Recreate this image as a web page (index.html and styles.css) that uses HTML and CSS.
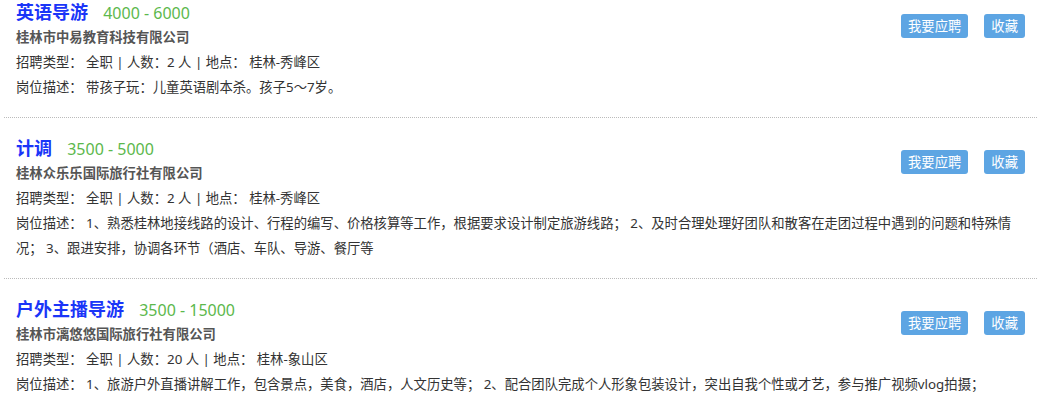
FILE: index.html
```html
<!DOCTYPE html>
<html lang="zh-CN">
<head>
  <meta charset="UTF-8">
  <title>招聘信息 - 桂林导游</title>
  <meta name="viewport" content="width=device-width, initial-scale=1.0">
  <link rel="stylesheet" href="styles.css">
</head>
<body>

  <div class="job-list">

    <div class="job">
      <div class="actions">
        <a class="btn" href="#">我要应聘</a>
        <a class="btn" href="#">收藏</a>
      </div>
      <div class="job-title">
        <a href="#">英语导游</a>
        <span class="salary">4000 - 6000</span>
      </div>
      <p class="company">桂林市中易教育科技有限公司</p>
      <p>招聘类型： 全职 | 人数：2 人 | 地点： 桂林-秀峰区</p>
      <p class="desc">岗位描述： 带孩子玩：儿童英语剧本杀。孩子5～7岁。</p>
    </div>

    <div class="job">
      <div class="actions">
        <a class="btn" href="#">我要应聘</a>
        <a class="btn" href="#">收藏</a>
      </div>
      <div class="job-title">
        <a href="#">计调</a>
        <span class="salary">3500 - 5000</span>
      </div>
      <p class="company">桂林众乐乐国际旅行社有限公司</p>
      <p>招聘类型： 全职 | 人数：2 人 | 地点： 桂林-秀峰区</p>
      <p class="desc">岗位描述： 1、熟悉桂林地接线路的设计、行程的编写、价格核算等工作，根据要求设计制定旅游线路； 2、及时合理处理好团队和散客在走团过程中遇到的问题和特殊情况； 3、跟进安排，协调各环节（酒店、车队、导游、餐厅等</p>
    </div>

    <div class="job">
      <div class="actions">
        <a class="btn" href="#">我要应聘</a>
        <a class="btn" href="#">收藏</a>
      </div>
      <div class="job-title">
        <a href="#">户外主播导游</a>
        <span class="salary">3500 - 15000</span>
      </div>
      <p class="company">桂林市漓悠悠国际旅行社有限公司</p>
      <p>招聘类型： 全职 | 人数：20 人 | 地点： 桂林-象山区</p>
      <p class="desc">岗位描述： 1、旅游户外直播讲解工作，包含景点，美食，酒店，人文历史等； 2、配合团队完成个人形象包装设计，突出自我个性或才艺，参与推广视频vlog拍摄；</p>
    </div>

  </div>

</body>
</html>
```

FILE: styles.css
```css
body {
  font-family: "Noto Sans", "Noto Sans CJK SC", sans-serif;
  background: #fff;
  color: #333;
  margin: 0;
  padding: 0;
}

.job-list {
  padding-left: 4px;
}

.job {
  padding: 18px 0 17px 12px;
  border-bottom: 1px dotted #bbb;
}

.job:first-child {
  padding-top: 0;
}

.actions {
  float: right;
  display: flex;
  gap: 16px;
  margin: 14px 12px 0 0;
}

.btn {
  display: block;
  height: 24px;
  line-height: 24px;
  padding: 0 7px;
  background-color: #5da5e3;
  color: #fff;
  font-size: 13.33px;
  text-decoration: none;
  border-radius: 3px;
}

.job-title {
  line-height: 24px;
}

.job-title a {
  font-size: 18px;
  font-weight: bold;
  color: #1a35f8;
  text-decoration: none;
}

.salary {
  font-size: 16px;
  color: #5cb84c;
  margin-left: 11px;
}

.job p {
  margin: 0;
  font-size: 13.33px;
  line-height: 25px;
}

.job p.company {
  font-weight: bold;
  color: #555;
}

.job p.desc {
  word-break: break-all;
}
```
